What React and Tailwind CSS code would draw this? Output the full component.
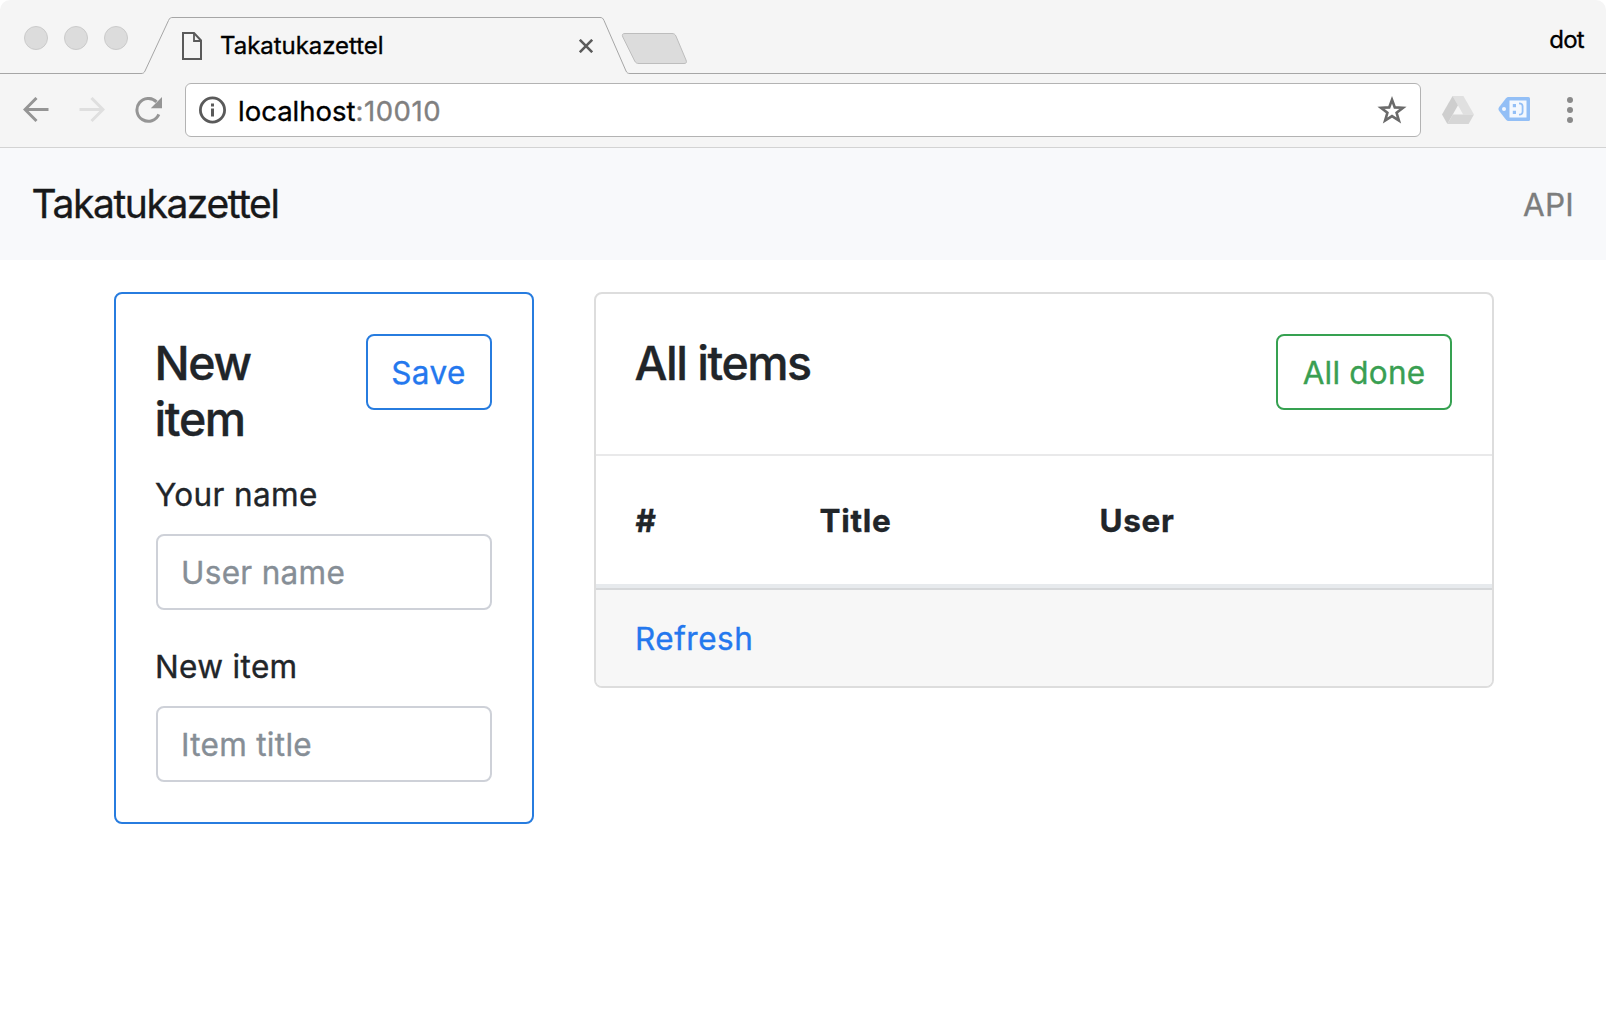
const TABS_OUTLINE =
  "M0 73.5H141C143 73.5 144 73 145 71L168.5 20.5C169.8 17.8 170.5 17.5 173 17.5H600C602 17.5 602.8 18 604 20.5L626 71C627 73 628 73.5 630 73.5H1606";

function TabStrip() {
  return (
    <div className="relative h-[74px] w-full shrink-0">
      <svg className="absolute inset-0" width="1606" height="74" fill="none">
        <path d={TABS_OUTLINE} stroke="#a6a6a6" />
        <path
          d="M625 33.5H672C674 33.5 675 34.2 676 36.2L686 60C687 62.4 686.3 63.5 684 63.5H639C637 63.5 635.8 63 634.7 61L622.8 37C621.8 34.6 622.6 33.5 625 33.5Z"
          fill="#dcdcdc"
          stroke="#bdbdbd"
        />
      </svg>
      <div className="relative flex h-full items-start">
        <div className="mt-[26px] ml-6 flex gap-4">
          <span className="size-6 rounded-full border border-[#cbcbcb] bg-[#dcdcdc]" />
          <span className="size-6 rounded-full border border-[#cbcbcb] bg-[#dcdcdc]" />
          <span className="size-6 rounded-full border border-[#cbcbcb] bg-[#dcdcdc]" />
        </div>
        <svg className="mt-8 ml-[54px]" width="20" height="28" fill="none" stroke="#5a5a5a" strokeWidth="2">
          <path d="M1 1H12L19 8.5V27H1Z" />
          <path d="M12 1V9H19" strokeWidth="1.8" />
        </svg>
        <span className="mt-[31px] ml-[18px] w-[358.5px] text-[24px] leading-[30px] tracking-[-0.04px] text-black">
          Takatukazettel
        </span>
        <svg className="mt-[39px]" width="14" height="14" stroke="#5a5a5a" strokeWidth="2.6">
          <path d="M0.8 0.8L13.2 13.2M13.2 0.8L0.8 13.2" />
        </svg>
        <span className="mt-[25px] mr-[22px] ml-auto text-[24px] leading-[30px] tracking-[-0.7px] text-black">
          dot
        </span>
      </div>
    </div>
  );
}

function Toolbar() {
  return (
    <div className="flex h-[74px] shrink-0 items-start border-b border-[#d3d3d3] pt-[9px]">
      <svg className="mt-3.5 ml-[23px]" width="26" height="26" fill="none" stroke="#959595" strokeWidth="3">
        <path d="M25.5 12.5H2.5M13.5 1L2 12.5L13.5 24" />
      </svg>
      <svg className="mt-3.5 ml-[30px]" width="26" height="26" fill="none" stroke="#dfdfdf" strokeWidth="3">
        <path d="M0.5 12.5H23.5M12.5 1L24 12.5L12.5 24" />
      </svg>
      <svg className="mt-3.5 ml-[30px]" width="28" height="27" fill="none">
        <path d="M21.5 4.9A11.4 11.4 0 1 0 23.8 17.4" stroke="#959595" strokeWidth="3" />
        <path d="M27 0V11.2H15.8Z" fill="#959595" />
      </svg>
      <div className="ml-[22px] flex h-[54px] w-[1236px] items-center rounded-[6px] border border-[#b3b3b3] bg-white px-[13px]">
        <svg width="28" height="28" fill="none">
          <circle cx="13.5" cy="14" r="12.1" stroke="#5a5a5a" strokeWidth="2.8" />
          <path d="M12 7.6H15V10.6H12ZM12 12.4H15V20.6H12Z" fill="#5a5a5a" />
        </svg>
        <span className="mt-px ml-[11px] text-[27.5px] leading-[34px] text-black">
          localhost<span className="tracking-[0.55px] text-[#808080]">:10010</span>
        </span>
        <svg className="mt-px ml-auto" width="30" height="30" fill="none">
          <path
            d="M15 3.8L17.8 11.4L26 11.8L19.6 16.8L21.9 24.6L15 20.1L8.1 24.6L10.4 16.8L4 11.8L12.2 11.4Z"
            stroke="#6a6a6a"
            strokeWidth="2.6"
          />
        </svg>
      </div>
      <svg className="mt-[13px] ml-[21px]" width="32" height="28">
        <path d="M10.6 0H21.4L32 18.5H21.2Z" fill="#e0e0e0" />
        <path d="M10.6 0L16 9.3L5.4 28L0 18.5Z" fill="#cecece" />
        <path d="M10.8 18.5H32L26.6 28H5.4Z" fill="#d6d6d6" />
      </svg>
      <svg className="mt-3.5 ml-6" width="32" height="24" fill="none">
        <path d="M1.2 10L8 1.2Q9 0 10.5 0H30.5Q32 0 32 1.5V22.5Q32 24 30.5 24H10.5Q9 24 8 22.8L1.2 14Q-0.3 12 1.2 10Z" fill="#93bff6" />
        <circle cx="6" cy="12" r="2" fill="#f4f8fe" />
        <path d="M11.5 3.5H28.5V20.5H11.5Z" fill="#f4f8fe" />
        <path d="M14.8 7H18V10.2H14.8ZM14.8 13.8H18V17H14.8Z" fill="#93bff6" />
        <path d="M21 6.3Q24.6 6.3 24.6 9.5V14.5Q24.6 17.7 21 17.7" stroke="#93bff6" strokeWidth="1.8" />
      </svg>
      <svg className="mt-3.5 ml-[37px]" width="6" height="26" fill="#8a8a8a">
        <circle cx="3" cy="3" r="3" />
        <circle cx="3" cy="13" r="3" />
        <circle cx="3" cy="23" r="3" />
      </svg>
    </div>
  );
}

function Field({ label, placeholder }) {
  return (
    <label className="block">
      <span className="-ml-px block h-12 text-[31.5px] leading-[50px] tracking-[0.35px]">{label}</span>
      <input
        className="mt-4 block h-[76px] w-full rounded-lg border-2 border-[#ced1d8] bg-white px-[23px] text-[31.5px] tracking-[0.3px] text-[#495057] placeholder:text-[#868e96] placeholder:opacity-100"
        placeholder={placeholder}
      />
    </label>
  );
}

function NewItemCard() {
  return (
    <section className="h-[532px] w-[420px] rounded-lg border-2 border-[#277cdf] bg-white p-10">
      <div className="mb-6 flex h-28 items-start justify-between">
        <h4 className="mt-px -ml-[1.5px] w-[120px] text-[46.5px] leading-[56px] font-medium tracking-[-1.35px]">
          New item
        </h4>
        <button className="h-[76px] w-[126px] rounded-lg border-2 border-[#277cdf] pt-px pr-px text-[31.5px] tracking-[0.4px] text-[#2478ee]">
          Save
        </button>
      </div>
      <div className="flex flex-col gap-8">
        <Field label="Your name" placeholder="User name" />
        <Field label="New item" placeholder="Item title" />
      </div>
    </section>
  );
}

function ItemsCard() {
  return (
    <section className="h-[396px] w-[900px] overflow-hidden rounded-lg border-2 border-[#dddddd] bg-white">
      <div className="flex h-[160px] items-start justify-between px-10 pt-10">
        <h4 className="mt-px -ml-[1.5px] text-[46.5px] leading-[56px] font-medium tracking-[-1.5px]">All items</h4>
        <button className="h-[76px] w-[176px] rounded-lg border-2 border-[#36a151] pt-px text-[31.5px] tracking-[0.2px] text-[#3a9f52]">
          All done
        </button>
      </div>
      <div className="grid h-[134px] grid-cols-[184px_280px_1fr] items-center border-t-2 border-b-4 border-t-[#e9e9ea] border-b-[#e7eaed] pt-0.5 pl-[39.5px] text-[31.5px] font-bold tracking-[0.7px]">
        <span>#</span>
        <span>Title</span>
        <span>User</span>
      </div>
      <div className="flex h-[98px] items-center border-t-2 border-[#d6d8da] bg-[#f7f7f7] px-[39px] pt-px text-[31.5px] tracking-[0.5px] text-[#2478ee]">
        Refresh
      </div>
    </section>
  );
}

export default function App() {
  return (
    <div className="h-[1020px] w-[1606px] overflow-hidden bg-white font-['Inter',sans-serif] text-[#212529] [-webkit-text-stroke:0.35px]">
      <div className="flex flex-col rounded-t-[10px] bg-[#f5f5f5]">
        <TabStrip />
        <Toolbar />
      </div>
      <nav className="flex h-28 items-center justify-between bg-[#f8f9fb] pt-px pr-8 pl-[31.5px]">
        <span className="text-[39px] tracking-[-1.41px] text-[#18191a]">Takatukazettel</span>
        <span className="text-[31.5px] tracking-[0.2px] text-[#7c7d7d]">API</span>
      </nav>
      <main className="flex items-start gap-[60px] pt-8 pl-[114px]">
        <NewItemCard />
        <ItemsCard />
      </main>
    </div>
  );
}
